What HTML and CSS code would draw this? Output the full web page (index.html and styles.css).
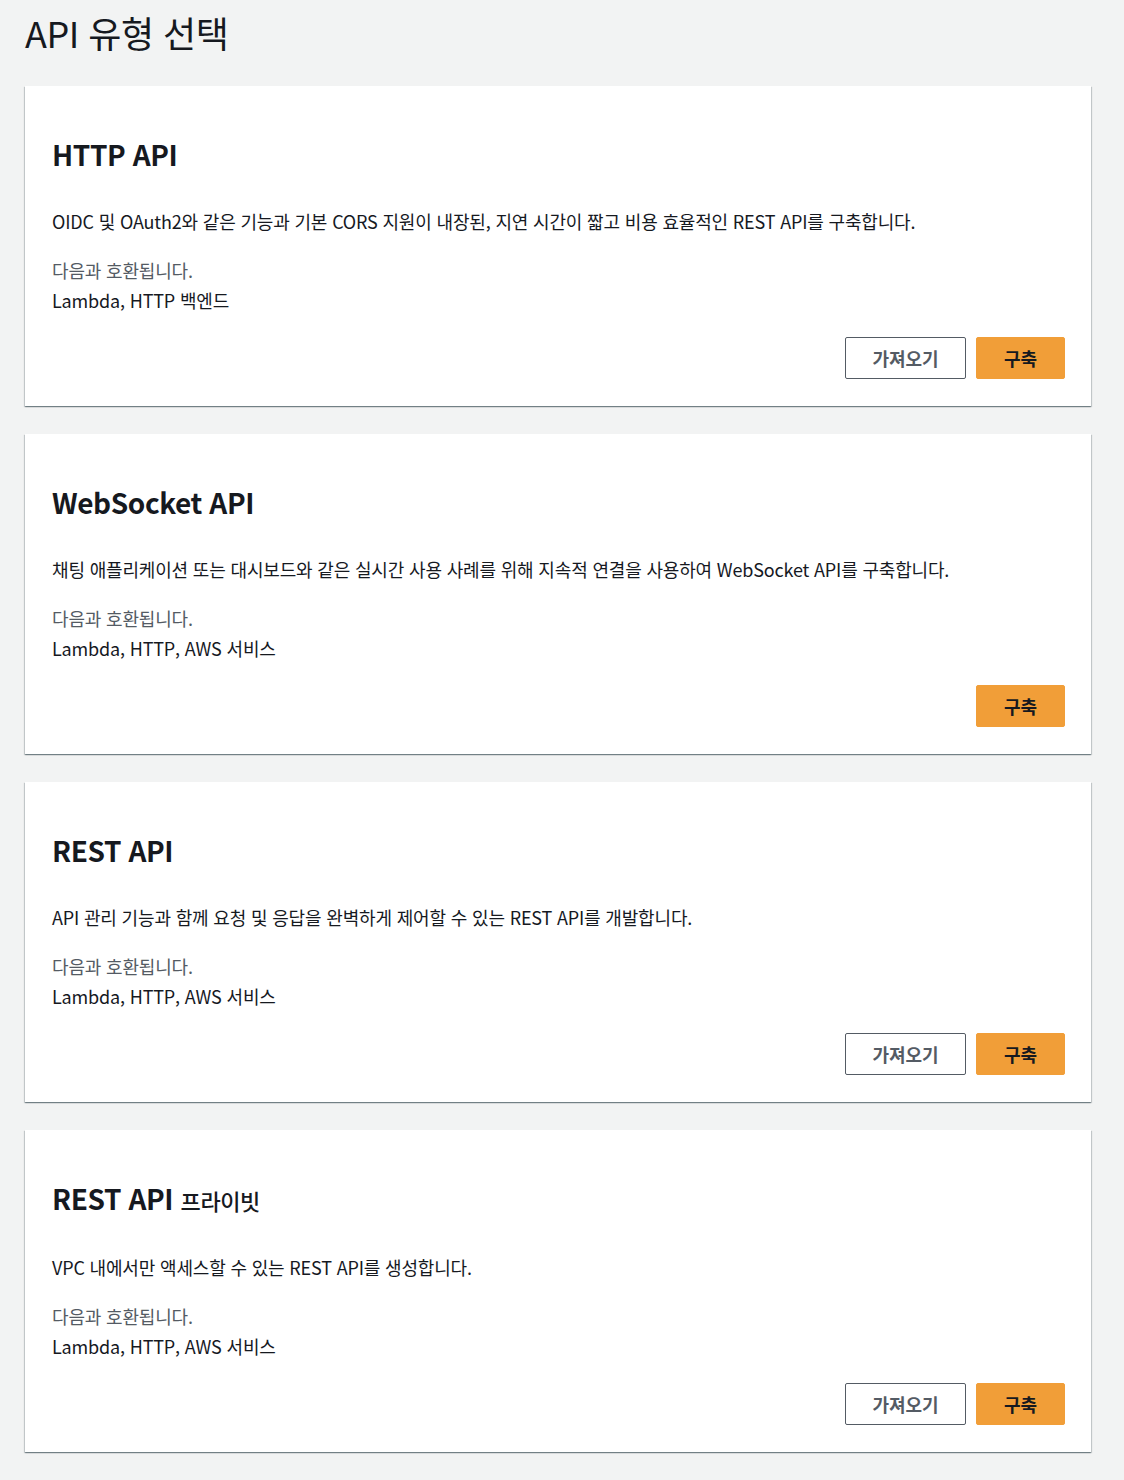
FILE: index.html
```html
<!DOCTYPE html>
<html lang="ko">
<head>
<meta charset="utf-8">
<title>API 유형 선택</title>
<link rel="stylesheet" href="styles.css">
</head>
<body>
<main class="page">
  <h1 class="page-title">API 유형 선택</h1>
  <div class="cards">
    <section class="card">
      <h2 class="card-title">HTTP API</h2>
      <p class="card-desc">OIDC 및 OAuth2와 같은 기능과 기본 CORS 지원이 내장된, 지연 시간이 짧고 비용 효율적인 REST API를 구축합니다.</p>
      <div class="compat">
        <div class="compat-label">다음과 호환됩니다.</div>
        <div class="compat-value">Lambda, HTTP 백엔드</div>
      </div>
      <div class="actions">
        <button class="btn btn-normal">가져오기</button>
        <button class="btn btn-primary">구축</button>
      </div>
    </section>
    <section class="card">
      <h2 class="card-title">WebSocket API</h2>
      <p class="card-desc">채팅 애플리케이션 또는 대시보드와 같은 실시간 사용 사례를 위해 지속적 연결을 사용하여 WebSocket API를 구축합니다.</p>
      <div class="compat">
        <div class="compat-label">다음과 호환됩니다.</div>
        <div class="compat-value">Lambda, HTTP, AWS 서비스</div>
      </div>
      <div class="actions">
        <button class="btn btn-primary">구축</button>
      </div>
    </section>
    <section class="card">
      <h2 class="card-title">REST API</h2>
      <p class="card-desc">API 관리 기능과 함께 요청 및 응답을 완벽하게 제어할 수 있는 REST API를 개발합니다.</p>
      <div class="compat">
        <div class="compat-label">다음과 호환됩니다.</div>
        <div class="compat-value">Lambda, HTTP, AWS 서비스</div>
      </div>
      <div class="actions">
        <button class="btn btn-normal">가져오기</button>
        <button class="btn btn-primary">구축</button>
      </div>
    </section>
    <section class="card">
      <h2 class="card-title">REST API <span class="card-title-sub">프라이빗</span></h2>
      <p class="card-desc">VPC 내에서만 액세스할 수 있는 REST API를 생성합니다.</p>
      <div class="compat">
        <div class="compat-label">다음과 호환됩니다.</div>
        <div class="compat-value">Lambda, HTTP, AWS 서비스</div>
      </div>
      <div class="actions">
        <button class="btn btn-normal">가져오기</button>
        <button class="btn btn-primary">구축</button>
      </div>
    </section>
  </div>
</main>
</body>
</html>
```

FILE: styles.css
```css
html, body {
  margin: 0;
  padding: 0;
  background: #f2f3f3;
}

body {
  font-family: "Noto Sans CJK KR", "Noto Sans", sans-serif;
  color: #16191f;
}

.page {
  width: 1066px;
  margin-left: 25px;
  padding-bottom: 27px;
}

.page-title {
  margin: 0;
  padding-top: 7px;
  height: 86px;
  box-sizing: border-box;
  font-size: 36px;
  font-weight: 400;
  line-height: 50px;
  letter-spacing: -0.5px;
}

.cards {
  display: flex;
  flex-direction: column;
  gap: 28px;
}

.card {
  background: #fff;
  padding: 47px 26px 27px 27px;
  box-shadow: 0 1px 1px 0 rgba(0, 28, 36, 0.35), 1px 1px 1px 0 rgba(0, 28, 36, 0.15), -1px 1px 1px 0 rgba(0, 28, 36, 0.15);
}

.card-title {
  margin: 0;
  font-size: 28px;
  font-weight: 700;
  line-height: 42px;
  letter-spacing: -0.4px;
}

.card-title-sub {
  font-size: 22px;
  font-weight: 500;
}

.card-desc {
  margin: 33px 0 0;
  font-size: 18px;
  line-height: 26px;
  letter-spacing: -0.17px;
}

.compat {
  margin-top: 21px;
  font-size: 18px;
  line-height: 30px;
  letter-spacing: -0.17px;
}

.compat-label {
  color: #545b64;
}

.actions {
  display: flex;
  justify-content: flex-end;
  gap: 10px;
  margin-top: 22px;
}

.btn {
  height: 42px;
  font-family: inherit;
  font-size: 18px;
  font-weight: 700;
  border-radius: 2px;
  cursor: pointer;
  padding: 0;
}

.btn-normal {
  width: 121px;
  background: #fff;
  color: #545b64;
  border: 1px solid #545b64;
}

.btn-primary {
  width: 89px;
  background: #f19e38;
  color: #16191f;
  border: 1px solid #f19e38;
}
```
